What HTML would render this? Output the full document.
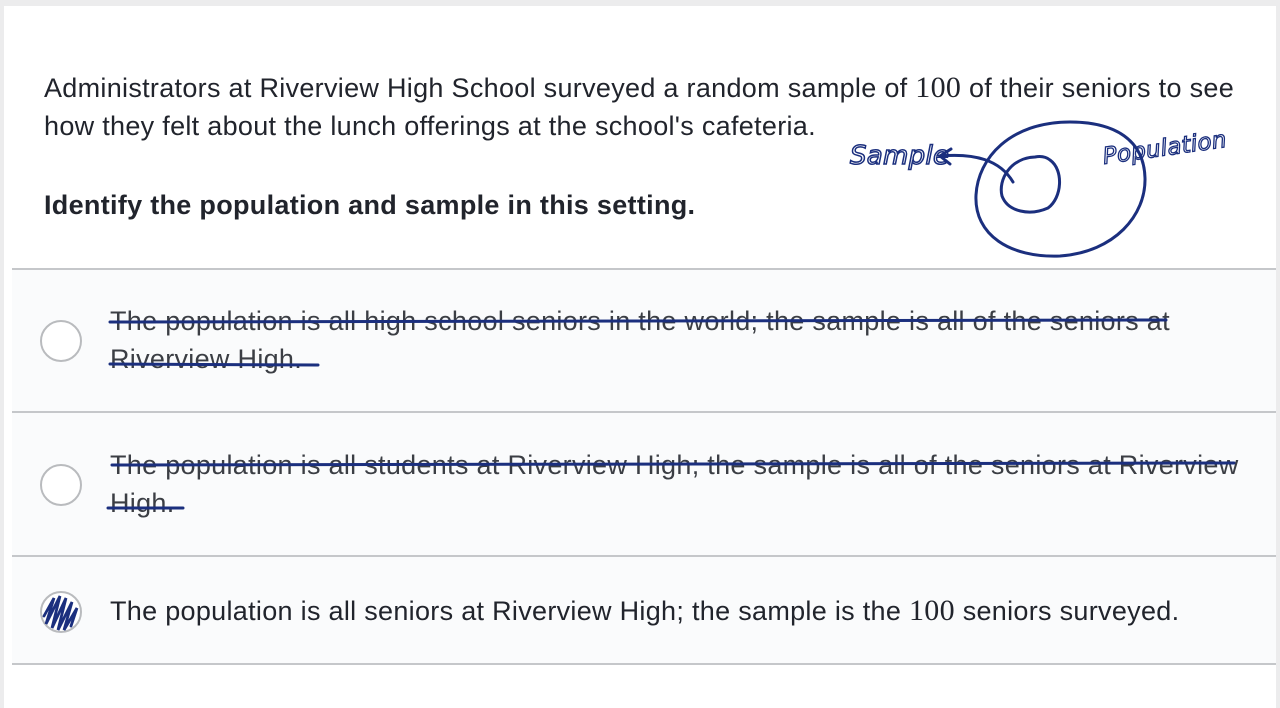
<!DOCTYPE html>
<html><head><meta charset="utf-8"><style>
html,body{margin:0;padding:0;}
body{width:1280px;height:708px;background:#ececed;position:relative;overflow:hidden;font-family:"Liberation Sans",sans-serif;color:#21242c;letter-spacing:0.3px;}
.card{position:absolute;left:4px;top:6px;right:4px;bottom:0;background:#fff;}
.q{position:absolute;left:44px;top:69px;font-size:27px;line-height:38px;width:1230px;white-space:nowrap;}
.b{position:absolute;left:44px;top:190px;font-size:27px;font-weight:bold;}
.hr{position:absolute;left:12px;right:4px;height:2px;background:#c5c7ca;}
.opt{position:absolute;left:12px;right:4px;background:#fafbfc;}
.rad{position:absolute;left:40px;width:42px;height:42px;border:2px solid #b9bbbe;border-radius:50%;background:#fff;box-sizing:border-box;}
.t{position:absolute;left:110px;font-size:27px;line-height:38px;width:1160px;white-space:nowrap;}
.s{color:#3b3e44;}
</style></head><body>
<div class="card"></div>
<div class="q">Administrators at Riverview High School surveyed a random sample of <span style="font-family:'Liberation Serif',serif;font-size:30px">100</span> of their seniors to see<br>how they felt about the lunch offerings at the school's cafeteria.</div>
<div class="b">Identify the population and sample in this setting.</div>
<div class="hr" style="top:268px"></div>
<div class="opt" style="top:270px;height:142px"></div>
<div class="hr" style="top:411px"></div>
<div class="opt" style="top:413px;height:143px"></div>
<div class="hr" style="top:555px"></div>
<div class="opt" style="top:557px;height:107px"></div>
<div class="hr" style="top:663px"></div>
<div class="rad" style="top:320px"></div>
<div class="rad" style="top:464px"></div>
<div class="t s" style="top:302px">The population is all high school seniors in the world; the sample is all of the seniors at<br>Riverview High.</div>
<div class="t s" style="top:446px">The population is all students at Riverview High; the sample is all of the seniors at Riverview<br>High.</div>
<div class="t" style="top:592px">The population is all seniors at Riverview High; the sample is the <span style="font-family:'Liberation Serif',serif;font-size:30px">100</span> seniors surveyed.</div>
<svg width="1280" height="708" style="position:absolute;left:0;top:0" fill="none" stroke="#1b2f7e" stroke-width="3" stroke-linecap="round">
<path d="M110 322 L1166 320"/>
<path d="M110 364 L318 365"/>
<path d="M112 465 L1234 463"/>
<path d="M108 508 L183 508"/>
<path d="M1070 122 C1010 122 978 158 976 195 C974 235 1010 258 1060 256 C1115 252 1146 215 1145 178 C1144 140 1115 122 1070 122"/>
<path d="M1035 157 C1010 158 998 180 1002 196 C1008 212 1030 216 1048 208 C1062 198 1064 170 1050 160 C1045 156 1040 156 1035 157"/>
<path d="M1013 182 C1000 160 975 153 940 156 M940 156 L951 149 M940 156 L950 164"/>
<text x="850" y="164" font-family="DejaVu Sans,sans-serif" font-size="26" fill="none" stroke="#1b2f7e" stroke-width="1.5" font-style="italic">Sample</text>
<text x="1104" y="164" font-family="DejaVu Sans,sans-serif" font-size="23" fill="none" stroke="#1b2f7e" stroke-width="1.3" font-style="italic" transform="rotate(-8 1104 164)">Population</text>
<circle cx="61" cy="612" r="20" fill="#fff" stroke="#b9bbbe" stroke-width="2"/>
<path d="M44 616 L54 598 L46 624 L60 596 L52 628 L66 598 L58 630 L72 602 L64 630 L77 608 L71 626" stroke-width="2.8"/>
</svg>
</body></html>
